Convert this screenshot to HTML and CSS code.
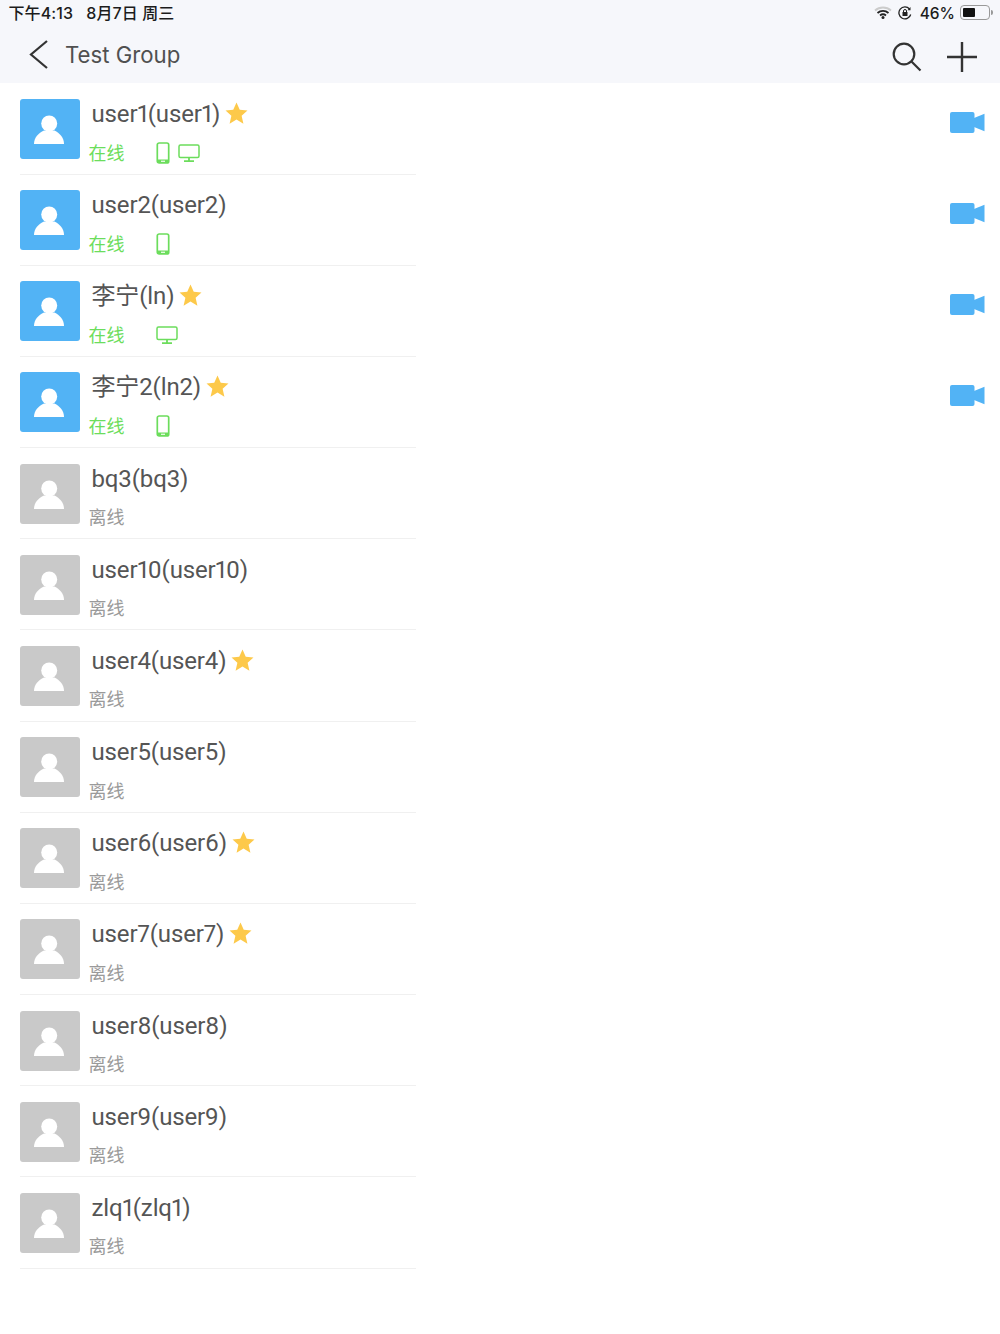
FILE: index.html
```html
<!DOCTYPE html>
<html lang="zh">
<head>
<meta charset="utf-8">
<title>Test Group</title>
<link rel="stylesheet" href="styles.css">
</head>
<body>
<svg class="defs" width="0" height="0" aria-hidden="true">
  <symbol id="person" viewBox="0 0 60 60"><circle cx="29.2" cy="24.500" r="8"/><path d="M14 45c0-6.500 4.500-11 10-13.500h10.500c5 2.500 9.500 7 9.500 13.500z"/></symbol>
  <symbol id="star" viewBox="0 0 22 22"><path d="M11 .5l3.100 7 7.400.7-5.600 5 1.700 7.500L11 16.800l-6.600 3.900 1.700-7.500-5.600-5 7.400-.7z"/></symbol>
  <symbol id="phone" viewBox="0 0 14 22"><rect x="1.300" y="1" width="11.400" height="20" rx="1.800" fill="none" stroke="currentColor" stroke-width="1.700"/><rect x="1.300" y="17.500" width="11.400" height="3.500" fill="currentColor"/><rect x="5" y="18.700" width="4" height="1.100" fill="#fff"/></symbol>
  <symbol id="monitor" viewBox="0 0 22 18"><rect x="1" y="1" width="20" height="12.500" rx="1.500" fill="none" stroke="currentColor" stroke-width="1.500"/><path d="M11 13.500v3.500M6 17.100h10" fill="none" stroke="currentColor" stroke-width="1.800"/></symbol>
  <symbol id="video" viewBox="0 0 35 22"><rect x="0" y="0" width="24.500" height="21" rx="2"/><path d="M24 6L34.500 1.800v17.500L24 15z"/></symbol>
</svg>

<header class="top">
  <div class="status">
    <span class="time">下午4:13&nbsp;&nbsp; 8月7日 周三</span>
    <div class="status-right">
      <svg class="wifi" viewBox="0 0 18 13" width="18" height="13"><path d="M1 4.500C5.500.500 12.500.500 17 4.500" fill="none" stroke="#ccc" stroke-width="1.800"/><path d="M3.500 7c3.200-2.800 7.800-2.800 11 0" fill="none" stroke="#222" stroke-width="1.800"/><path d="M6 9.500c1.800-1.500 4.200-1.500 6 0" fill="none" stroke="#222" stroke-width="1.800"/><circle cx="9" cy="11.500" r="1.500" fill="#222"/></svg>
      <svg class="lock" viewBox="0 0 14 14" width="14" height="14"><path d="M12.700 8.500A6 6 0 1 1 11.500 3" fill="none" stroke="#222" stroke-width="1.300"/><path d="M12.500 1v3.200H9.500z" fill="#222"/><rect x="4.500" y="6" width="5" height="4" fill="#222"/><path d="M5.500 6V5a1.500 1.500 0 0 1 3 0v1" fill="none" stroke="#222"/></svg>
      <span class="pct">46%</span>
      <span class="battery"><span class="battery-fill"></span></span>
      <span class="battery-tip"></span>
    </div>
  </div>
  <nav class="nav">
    <svg class="back" viewBox="0 0 20 30" width="20" height="30"><path d="M19 1L3 14.500 19 28" fill="none" stroke="#333" stroke-width="2.200"/></svg>
    <span class="title">Test Group</span>
    <svg class="search" viewBox="0 0 30 30" width="30" height="30"><circle cx="12" cy="12" r="10.300" fill="none" stroke="#333" stroke-width="2.200"/><path d="M19.500 19.500l9 9" fill="none" stroke="#333" stroke-width="2.200"/></svg>
    <svg class="plus" viewBox="0 0 30 30" width="30" height="30"><path d="M15 0v30M0 15h30" fill="none" stroke="#333" stroke-width="2.400"/></svg>
  </nav>
</header>

<main class="list">
  <div class="row"><div class="avatar on"><svg><use href="#person"/></svg></div><div class="info"><div class="name">user1(user1)<svg class="star"><use href="#star"/></svg></div><div class="state on"><span class="state-text">在线</span><svg class="phone"><use href="#phone"/></svg><svg class="monitor"><use href="#monitor"/></svg></div></div><svg class="video"><use href="#video"/></svg></div>
  <div class="row"><div class="avatar on"><svg><use href="#person"/></svg></div><div class="info"><div class="name">user2(user2)</div><div class="state on"><span class="state-text">在线</span><svg class="phone"><use href="#phone"/></svg></div></div><svg class="video"><use href="#video"/></svg></div>
  <div class="row"><div class="avatar on"><svg><use href="#person"/></svg></div><div class="info"><div class="name">李宁(ln)<svg class="star"><use href="#star"/></svg></div><div class="state on"><span class="state-text">在线</span><svg class="monitor solo"><use href="#monitor"/></svg></div></div><svg class="video"><use href="#video"/></svg></div>
  <div class="row"><div class="avatar on"><svg><use href="#person"/></svg></div><div class="info"><div class="name">李宁2(ln2)<svg class="star"><use href="#star"/></svg></div><div class="state on"><span class="state-text">在线</span><svg class="phone"><use href="#phone"/></svg></div></div><svg class="video"><use href="#video"/></svg></div>
  <div class="row"><div class="avatar"><svg><use href="#person"/></svg></div><div class="info"><div class="name">bq3(bq3)</div><div class="state"><span class="state-text">离线</span></div></div></div>
  <div class="row"><div class="avatar"><svg><use href="#person"/></svg></div><div class="info"><div class="name">user10(user10)</div><div class="state"><span class="state-text">离线</span></div></div></div>
  <div class="row"><div class="avatar"><svg><use href="#person"/></svg></div><div class="info"><div class="name">user4(user4)<svg class="star"><use href="#star"/></svg></div><div class="state"><span class="state-text">离线</span></div></div></div>
  <div class="row"><div class="avatar"><svg><use href="#person"/></svg></div><div class="info"><div class="name">user5(user5)</div><div class="state"><span class="state-text">离线</span></div></div></div>
  <div class="row"><div class="avatar"><svg><use href="#person"/></svg></div><div class="info"><div class="name">user6(user6)<svg class="star"><use href="#star"/></svg></div><div class="state"><span class="state-text">离线</span></div></div></div>
  <div class="row"><div class="avatar"><svg><use href="#person"/></svg></div><div class="info"><div class="name">user7(user7)<svg class="star"><use href="#star"/></svg></div><div class="state"><span class="state-text">离线</span></div></div></div>
  <div class="row"><div class="avatar"><svg><use href="#person"/></svg></div><div class="info"><div class="name">user8(user8)</div><div class="state"><span class="state-text">离线</span></div></div></div>
  <div class="row"><div class="avatar"><svg><use href="#person"/></svg></div><div class="info"><div class="name">user9(user9)</div><div class="state"><span class="state-text">离线</span></div></div></div>
  <div class="row"><div class="avatar"><svg><use href="#person"/></svg></div><div class="info"><div class="name">zlq1(zlq1)</div><div class="state"><span class="state-text">离线</span></div></div></div>
</main>
</body>
</html>
```
FILE: styles.css
```css
* { box-sizing: border-box; }
html, body { margin: 0; padding: 0; background: #fff; }
body { width: 1000px; height: 1334px; overflow: hidden; font-family: "Inter", "Noto Sans CJK SC", sans-serif; color: #4a4a4a; }
.defs { display: block; width: 0; height: 0; }

.top { background: #f6f7fb; height: 83px; }
.status { height: 27px; display: flex; align-items: center; justify-content: space-between; padding: 0 7px 2px 8.500px; color: #1c1c1c; font-size: 16px; font-weight: 500; }
.time { white-space: pre; letter-spacing: 0.1px; margin-bottom: 1px; }
.status-right { display: flex; align-items: center; }
.wifi { margin-right: 6px; }
.lock { margin-right: 8px; }
.pct { margin-right: 5px; font-size: 15.500px; margin-top: 1px; }
.battery { width: 30px; height: 15px; border: 1px solid #999; border-radius: 4px; padding: 2px; display: block; }
.battery-fill { display: block; width: 12px; height: 9px; background: #111; border-radius: 1px; }
.battery-tip { width: 2px; height: 5px; background: #999; margin-left: 1px; border-radius: 0 2px 2px 0; }

.nav { height: 56px; display: flex; align-items: center; padding-left: 28px; padding-right: 23px; }
.back { margin-right: 18px; }
.title { font-size: 22.200px; color: #505050; flex: 1; padding-bottom: 1px; margin-left: -1px; }
.search { margin-right: 25px; margin-top: 4px; }
.plus { margin-top: 4px; }

.row { height: 91.170px; position: relative; display: flex; padding: 16px 15px 0 19.500px; }
.row::after { content: ""; position: absolute; left: 20px; width: 396px; bottom: -0.500px; height: 1px; background: #f0f0f0; }
.avatar { width: 60px; height: 60px; border-radius: 3px; background: #c9c9c9; flex: none; }
.avatar.on { background: #52b3f5; }
.avatar svg { width: 60px; height: 60px; fill: #fff; display: block; }
.info { flex: 1; margin-left: 9px; }
.name { font-family: "Roboto", "Noto Sans CJK SC", sans-serif; font-size: 24px; line-height: 30px; padding-left: 3px; color: #555; display: flex; align-items: center; font-variant-numeric: proportional-nums; font-feature-settings: "pnum" 1; letter-spacing: -0.130px; }
.star { width: 23px; height: 23px; fill: #fdc94a; margin-left: 5px; margin-top: -1px; }
.state { display: flex; align-items: center; height: 24px; margin-top: 12px; color: #9a9a9a; }
.state.on { color: #6cdd5c; }
.state-text { font-size: 18px; width: 67px; margin-bottom: 3px; }
.phone { width: 14px; height: 22px; margin-right: 8px; }
.monitor { width: 22px; height: 18px; }
.video { width: 35px; height: 22px; fill: #52b3f5; margin-top: 12.500px; flex: none; }
```
